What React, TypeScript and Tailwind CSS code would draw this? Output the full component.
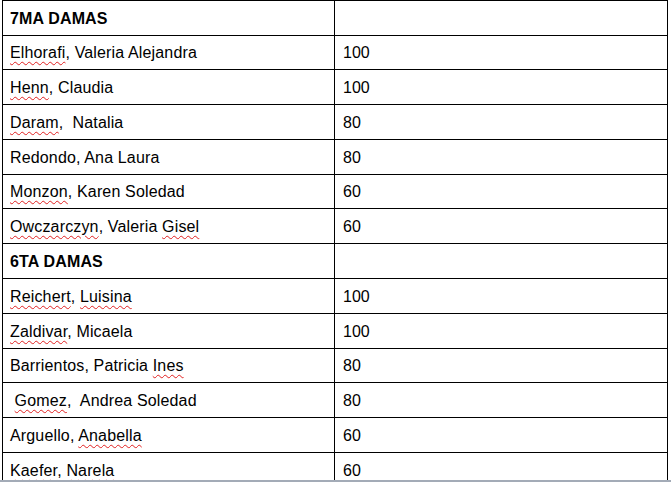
import React from "react";

type Part = { t: string; u?: boolean };
type Row = { name: Part[]; value: string; bold?: boolean; h: string };

const W = (t: string): Part => ({ t, u: true });
const P = (t: string): Part => ({ t });

const rows: Row[] = [
  { name: [P("7MA DAMAS")], value: "", bold: true, h: "h-[35px]" },
  { name: [W("Elhorafi"), P(", Valeria Alejandra")], value: "100", h: "h-[34px]" },
  { name: [W("Henn"), P(", Claudia")], value: "100", h: "h-[35px]" },
  { name: [W("Daram"), P(",  Natalia")], value: "80", h: "h-[35px]" },
  { name: [P("Redondo, Ana Laura")], value: "80", h: "h-[35px]" },
  { name: [W("Monzon"), P(", Karen Soledad")], value: "60", h: "h-[34px]" },
  { name: [W("Owczarczyn"), P(", Valeria "), W("Gisel")], value: "60", h: "h-[35px]" },
  { name: [P("6TA DAMAS")], value: "", bold: true, h: "h-[35px]" },
  { name: [W("Reichert"), P(", "), W("Luisina")], value: "100", h: "h-[35px]" },
  { name: [W("Zaldivar"), P(", Micaela")], value: "100", h: "h-[35px]" },
  { name: [P("Barrientos, Patricia "), W("Ines")], value: "80", h: "h-[34px]" },
  { name: [P(" "), W("Gomez"), P(",  Andrea Soledad")], value: "80", h: "h-[35px]" },
  { name: [P("Arguello, "), W("Anabella")], value: "60", h: "h-[35px]" },
  { name: [W("Kaefer"), P(", "), W("Narela")], value: "60", h: "h-[35px]" },
];

export default function App() {
  return (
    <div
      className="w-[671px] h-[483px] bg-white overflow-hidden flex flex-col text-black"
      style={{ fontFamily: '"Liberation Sans", Arial, sans-serif' }}
    >
      <div className="h-[480px] shrink-0 overflow-hidden pl-[2px]">
        <div className="w-[666px] border-t border-l border-r border-black">
          {rows.map((r, i) => (
            <div key={i} className={`flex border-b border-black ${r.h}`}>
              <div
                className={`w-[332px] shrink-0 border-r border-black flex items-center pl-[7px] pt-[1px] text-[16px] tracking-[0.15px] whitespace-pre ${
                  r.bold ? "font-bold" : ""
                }`}
              >
                <span>
                  {r.name.map((p, j) =>
                    p.u ? (
                      <span
                        key={j}
                        className="underline decoration-wavy decoration-[#e02020] decoration-1 underline-offset-[3px]"
                      >
                        {p.t}
                      </span>
                    ) : (
                      <span key={j}>{p.t}</span>
                    )
                  )}
                </span>
              </div>
              <div className="flex-1 flex items-center pl-[8px] pt-[1px] text-[16px]">
                {r.value}
              </div>
            </div>
          ))}
        </div>
      </div>
      <div className="h-[2px] shrink-0 bg-[#a3abb7]" />
      <div className="flex-1 bg-white" />
    </div>
  );
}
